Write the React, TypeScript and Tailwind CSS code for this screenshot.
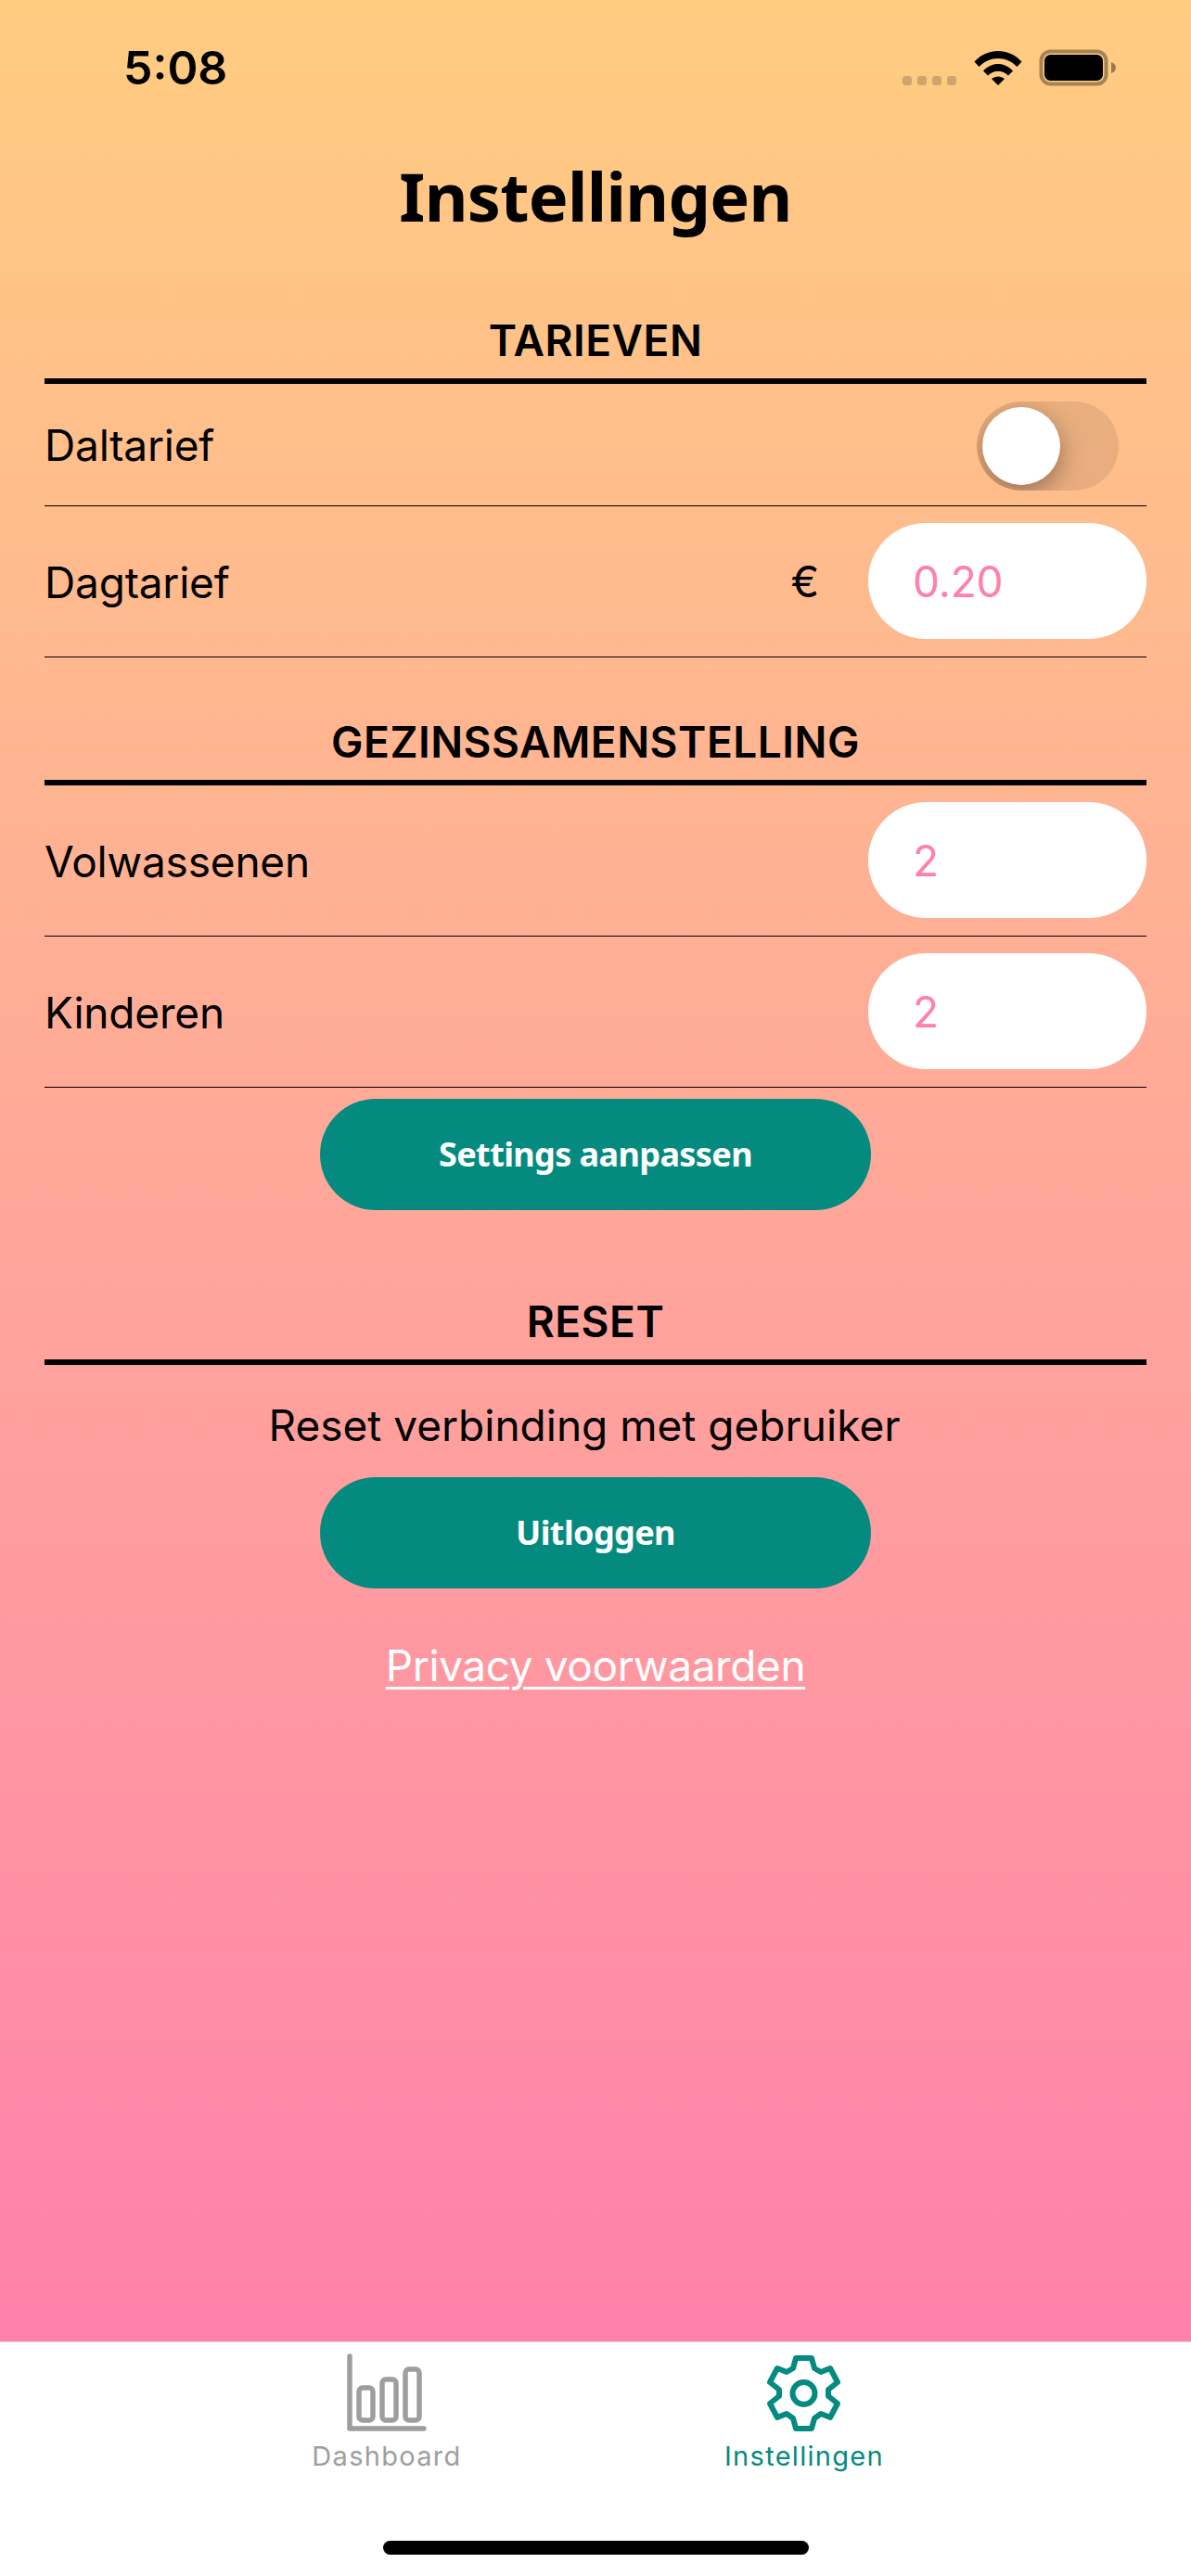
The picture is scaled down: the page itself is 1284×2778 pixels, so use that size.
const ui = { fontFamily: 'Inter, Roboto, "Liberation Sans", sans-serif' };
const head = { fontFamily: '"Noto Sans", "Open Sans", sans-serif' };

function Heading({ children, className }: { children: string; className: string }) {
  return (
    <div className={className}>
      <div className="h-[48px] flex items-center justify-center text-[46px] font-semibold text-black tracking-[0.5px]">
        {children}
      </div>
      <div className="mt-[17px] h-[6px] bg-black" />
    </div>
  );
}

function Input({ value }: { value: string }) {
  return (
    <div className="-mt-[2px] w-[300px] h-[125px] rounded-[62px] bg-white flex items-center pl-[48px] text-[46px] text-[#ff80ab]">
      <span className="mt-[3px]">{value}</span>
    </div>
  );
}

function Row({ label, h, children }: { label: string; h: string; children: React.ReactNode }) {
  return (
    <div className={`${h} border-b border-black flex items-center justify-between text-[46px] tracking-[-0.2px] text-black`}>
      <span className="mt-[2px]">{label}</span>
      {children}
    </div>
  );
}

function Btn({ children }: { children: string }) {
  return (
    <div className="self-center w-[594px] h-[120px] rounded-[60px] bg-[#058a80] flex items-center justify-center text-[36px] font-bold text-white tracking-[-0.6px]" style={head}>
      {children}
    </div>
  );
}

export default function App() {
  return (
    <div className="w-[1284px] h-[2778px] flex flex-col bg-white" style={ui}>
      <main className="h-[2525px] flex flex-col px-[48px] bg-gradient-to-b from-[#ffcc80] to-[#ff80ab]">
        <div className="h-[146px] flex items-center justify-between -mx-[48px] pl-[133px] pr-[80px]">
          <span className="text-[50px] font-semibold text-black tracking-[0px]">5:08</span>
          <div className="flex items-center">
            <div className="flex gap-[6px] mt-[27px] mr-[19px]">
              <span className="w-[10px] h-[10px] rounded-[3px] bg-[#cfa56c]" />
              <span className="w-[10px] h-[10px] rounded-[3px] bg-[#cfa56c]" />
              <span className="w-[10px] h-[10px] rounded-[3px] bg-[#cfa56c]" />
              <span className="w-[10px] h-[10px] rounded-[3px] bg-[#cfa56c]" />
            </div>
            <svg width="52" height="38" viewBox="0 0 52 38" className="mr-[18px]">
              <path d="M0.5 12.5 C14 -3 38 -3 51.5 12.5 L46.5 18 C35 6 17 6 5.500 18 Z" fill="#000" />
              <path d="M10 22.500 C19 12.500 33 12.500 42 22.500 L37 27.500 C31 21 21 21 15 27.500 Z" fill="#000" />
              <path d="M19 31 C23 27.500 29 27.500 33 31 L26 38 Z" fill="#000" />
            </svg>
            <svg width="84" height="40" viewBox="0 0 84 40">
              <rect x="2.500" y="2.500" width="70" height="35" rx="10" fill="none" stroke="#000" strokeOpacity="0.35" strokeWidth="4" />
              <rect x="6" y="6" width="63" height="28" rx="6.500" fill="#000" />
              <path d="M78 14 C81 15 83 17 83 20 C83 23 81 25 78 26 Z" fill="#000" fillOpacity="0.4" />
            </svg>
          </div>
        </div>

        <h1 className="h-[130px] flex items-center justify-center text-[72px] font-bold text-black tracking-[-0.7px]" style={head}>
          Instellingen
        </h1>

        <Heading className="mt-[67px]">TARIEVEN</Heading>
        <Row label="Daltarief" h="h-[132px]">
          <div className="relative mt-[2px] mr-[30px] w-[153px] h-[96px] rounded-[48px] bg-[rgba(0,0,0,0.085)] overflow-hidden">
            <div className="absolute left-[6px] top-[6px] w-[84px] h-[84px] rounded-full bg-white shadow-[0_8px_26px_rgba(0,0,0,0.35)]" />
          </div>
        </Row>
        <Row label="Dagtarief" h="h-[163px]">
          <div className="flex items-center gap-[53px]">
            <span className="text-[46px]">€</span>
            <Input value="0.20" />
          </div>
        </Row>

        <Heading className="mt-[67px]">GEZINSSAMENSTELLING</Heading>
        <Row label="Volwassenen" h="h-[163px]"><Input value="2" /></Row>
        <Row label="Kinderen" h="h-[163px]"><Input value="2" /></Row>

        <div className="h-[12px]" />
        <Btn>Settings aanpassen</Btn>

        <Heading className="mt-[96px]">RESET</Heading>
        <div className="mt-[36px] pr-[24px] text-center text-[46px] tracking-[0px] leading-[58px] text-black">Reset verbinding met gebruiker</div>
        <div className="h-[27px]" />
        <Btn>Uitloggen</Btn>
        <div className="mt-[54px] text-center text-[46px] tracking-[-0.4px] leading-[58px] text-white underline underline-offset-[6px] decoration-[3px]">
          Privacy voorwaarden
        </div>
      </main>

      <nav className="relative flex-1 flex justify-center border-t border-[#d8d8d8]">
        <div className="w-[450px] flex flex-col items-center pt-[12px]">
          <svg width="86" height="86" viewBox="0 0 86 86">
            <g fill="none" stroke="#9e9e9e" strokeWidth="5.500" strokeLinecap="round" strokeLinejoin="round">
              <path d="M3 3 V81 H83" />
              <rect x="13" y="37" width="15" height="35" rx="4" />
              <rect x="38" y="28" width="15" height="44" rx="4" />
              <rect x="63" y="17" width="15" height="55" rx="4" />
            </g>
          </svg>
          <span className="mt-[7px] text-[29px] leading-[36px] tracking-[1.3px] text-[#9e9e9e]">Dashboard</span>
        </div>
        <div className="w-[450px] flex flex-col items-center pt-[12px]">
          <svg width="86" height="86" viewBox="-3 -2 86 86">
            <path
              d="M31 3 H48 L51 14 L58 18 L68 14 L76 29 L66 37 V44 L76 52 L68 67 L58 63 L51 68 L48 79 H31 L28 68 L21 63 L11 67 L3 52 L13 44 V37 L3 29 L11 14 L21 18 L28 14 Z"
              fill="none"
              stroke="#058a80"
              strokeWidth="6"
              strokeLinejoin="round"
            />
            <ellipse cx="39.500" cy="41" rx="12" ry="12" fill="none" stroke="#058a80" strokeWidth="6" />
          </svg>
          <span className="mt-[7px] text-[29px] leading-[36px] tracking-[1.3px] text-[#058a80]">Instellingen</span>
        </div>
        <div className="absolute left-[413px] top-[214px] w-[459px] h-[15px] rounded-full bg-black" />
      </nav>
    </div>
  );
}
